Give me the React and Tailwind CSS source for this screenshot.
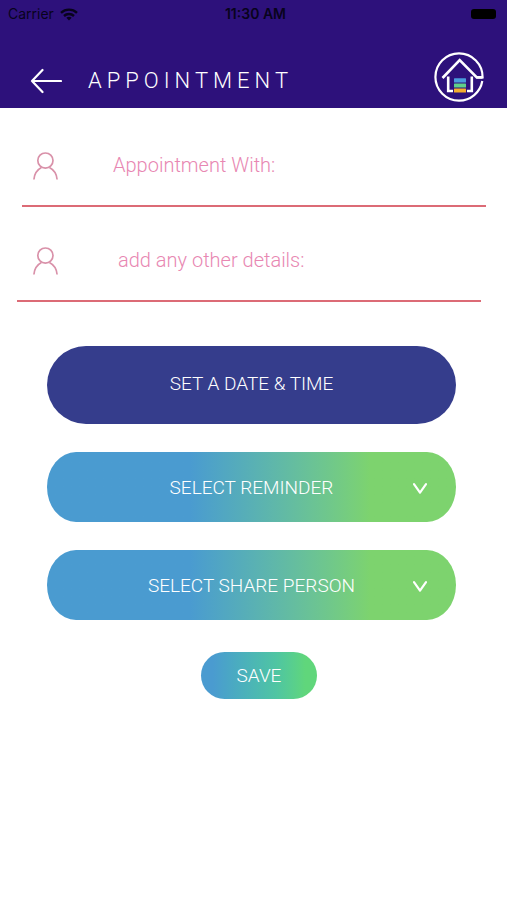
import { useState } from 'react';

const fields = [
  { id: 'with', placeholder: 'Appointment With:', row: 'ml-[22px] mr-[21px] pl-[11px]', input: 'ml-[54px]' },
  { id: 'details', placeholder: 'add any other details:', row: 'ml-[17px] mr-[26px] pl-4', input: 'ml-[59px]' },
];

const selects = [
  { id: 'reminder', label: 'SELECT REMINDER', options: ['10 MINUTES', '1 HOUR', '1 DAY'] },
  { id: 'share', label: 'SELECT SHARE PERSON', options: ['FAMILY', 'FRIEND', 'CARER'] },
];

const WifiIcon = () => (
  <svg viewBox="0 0 18 13" className="w-[18px] h-[13px]" fill="none" stroke="#08031c" strokeWidth="2.4" aria-hidden="true">
    <path d="M1 4.8C5.5.6 12.5.6 17 4.8" />
    <path d="M4 8C6.8 5.4 11.2 5.4 14 8" />
    <path d="M6.4 9.8C7.8 8.5 10.2 8.5 11.6 9.8L9 12.6Z" fill="#08031c" stroke="none" />
  </svg>
);

const BackIcon = () => (
  <svg viewBox="0 0 32 26" className="w-8 h-[26px]" fill="none" stroke="white" strokeWidth="2.2" strokeLinecap="round" strokeLinejoin="round" aria-hidden="true">
    <path d="M31 13H2M12.5 2L2 13L12.5 24" />
  </svg>
);

const HomeLogo = () => (
  <svg viewBox="0 0 50 50" className="w-[50px] h-[50px]" fill="none" stroke="white" strokeWidth="2.2" aria-hidden="true">
    <path d="M48.3 29A23.6 23.6 0 0 1 25 48.6A23.6 23.6 0 0 1 25 1.4A23.6 23.6 0 0 1 48.6 25.4H42.5" />
    <path d="M48.6 25.4H42.8L25.7 8.2L8.5 26" strokeWidth="2.6" />
    <path d="M14.2 24.5V39H19M37.8 24.5V39H33" strokeWidth="2.6" />
    <g stroke="none">
      <rect x="20" y="26.3" width="12" height="4.2" rx="0.5" fill="#4a9bdc" />
      <rect x="20" y="31.4" width="12" height="4.2" rx="0.5" fill="#5fd08a" />
      <rect x="20" y="36.4" width="12" height="4.2" rx="0.5" fill="#f5ae2d" />
    </g>
  </svg>
);

const PersonIcon = () => (
  <svg viewBox="0 0 26 28" className="w-[26px] h-7 mb-0.5 shrink-0" fill="none" stroke="#d991a9" strokeWidth="1.7" aria-hidden="true">
    <circle cx="12.4" cy="8.6" r="7.6" />
    <path d="M.9 27.5C1.3 21.5 4.5 17.5 8.4 15.4M16.4 15.4C20.5 17.5 23.7 21.5 24.1 27.5" />
  </svg>
);

const Chevron = () => (
  <svg viewBox="0 0 14 12" className="absolute right-[29px] top-1/2 -mt-1 w-[14px] h-3 pointer-events-none" fill="none" stroke="white" strokeWidth="2.2" strokeLinecap="round" strokeLinejoin="round" aria-hidden="true">
    <path d="M1 1.2L7 9.6L13 1.2" />
  </svg>
);

function App() {
  const [values, setValues] = useState({ with: '', details: '', reminder: '', share: '' });
  const update = (e) => setValues({ ...values, [e.target.id]: e.target.value });

  return (
    <div className="min-h-screen bg-white font-['Roboto',sans-serif] font-light text-xl">
      <header className="bg-[#2d117b] text-white">
        {/* Status bar */}
        <div className="grid grid-cols-3 items-center h-7 px-2 text-[#08031c] text-sm font-['Inter',sans-serif]">
          <div className="flex items-center gap-1.5 font-normal">
            Carrier
            <WifiIcon />
          </div>
          <span className="text-center font-semibold whitespace-nowrap pl-1">11:30 AM</span>
          <div className="justify-self-end w-[25px] h-[10px] mr-[3px] rounded-[3px] bg-black"></div>
        </div>

        {/* Nav bar */}
        <div className="flex items-center h-20 pl-[30px] pr-[23px] pt-[26px]">
          <button type="button" aria-label="Back">
            <BackIcon />
          </button>
          <h1 className="ml-[26px] text-[22px] tracking-[5px]">APPOINTMENT</h1>
          <a href="#home" aria-label="Home" className="ml-auto mb-2">
            <HomeLogo />
          </a>
        </div>
      </header>

      <form className="pt-5" onSubmit={(e) => e.preventDefault()}>
        <div className="space-y-4">
          {fields.map((field) => (
            <div key={field.id} className={`flex items-center h-[79px] border-b-2 border-[#dc6b76] ${field.row}`}>
              <PersonIcon />
              <input
                id={field.id}
                type="text"
                aria-label={field.placeholder}
                placeholder={field.placeholder}
                value={values[field.id]}
                onChange={update}
                className={`flex-1 min-w-0 mb-1 bg-transparent outline-none text-[#e887b2] placeholder:text-[#e887b2] placeholder:opacity-100 ${field.input}`}
              />
            </div>
          ))}
        </div>

        <div className="mt-11 ml-[47px] mr-[51px] space-y-7 text-[19px] text-white">
          <button type="button" className="block w-full h-[78px] pb-0.5 rounded-full bg-[#353d8c]">
            SET A DATE &amp; TIME
          </button>

          {selects.map((select) => (
            <div key={select.id} className="relative">
              <select
                id={select.id}
                aria-label={select.label}
                value={values[select.id]}
                onChange={update}
                className="block w-full h-[70px] pt-0.5 appearance-none rounded-[29px/35px] bg-linear-to-r from-[#4a9bd0] from-35% to-[#7dd36e] to-79% text-center [text-align-last:center] outline-none"
              >
                <option value="">{select.label}</option>
                {select.options.map((option) => (
                  <option key={option} value={option} className="text-gray-900">{option}</option>
                ))}
              </select>
              <Chevron />
            </div>
          ))}
        </div>

        <div className="flex justify-center mt-8 pl-[11px]">
          <button type="submit" className="w-[116px] h-[47px] pt-0.5 rounded-full bg-linear-to-r from-[#4a9bd0] from-10% via-[#4fc5a2] via-65% to-[#60d67b] to-90% text-[19px] text-white">
            SAVE
          </button>
        </div>
      </form>
    </div>
  );
}

export default App;
